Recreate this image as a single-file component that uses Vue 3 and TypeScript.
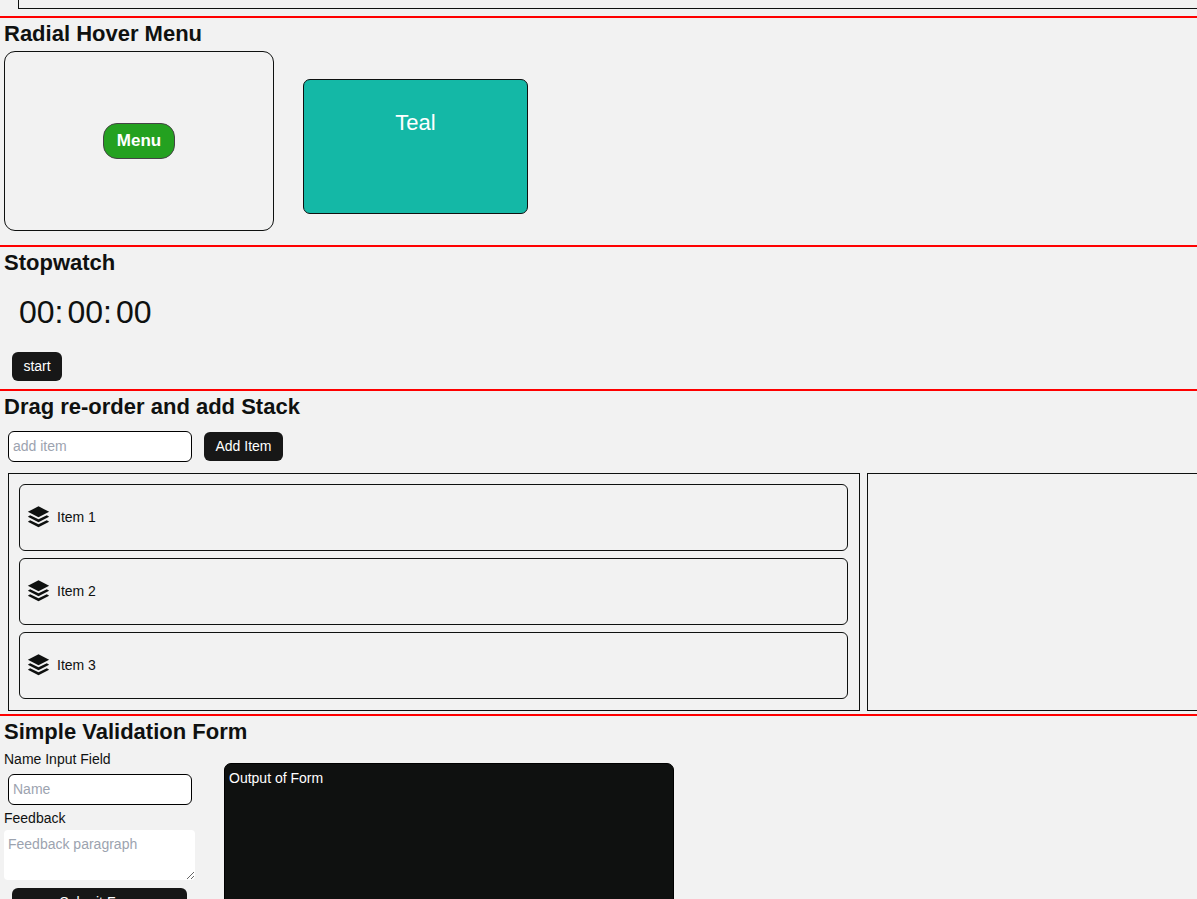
<script setup lang="ts">
import { ref } from 'vue'

interface StackItem {
  id: number
  label: string
}

const items = ref<StackItem[]>([
  { id: 1, label: 'Item 1' },
  { id: 2, label: 'Item 2' },
  { id: 3, label: 'Item 3' },
])
const draft = ref('')
const time = ref<string[]>(['00', '00', '00'])
const name = ref('')
const feedback = ref('')

function addItem(): void {
  const label = draft.value.trim()
  if (!label) return
  items.value.push({ id: items.value.length + 1, label })
  draft.value = ''
}
</script>

<template>
  <main class="page">
    <section class="section previous">
      <div class="previous-box"></div>
    </section>

    <section class="section">
      <h2>Radial Hover Menu</h2>
      <div class="radial-row">
        <div class="radial-area">
          <button type="button" class="menu-button">Menu</button>
        </div>
        <div class="swatch">Teal</div>
      </div>
    </section>

    <section class="section">
      <h2>Stopwatch</h2>
      <div class="clock">
        <span>{{ time[0] }}:</span>
        <span>{{ time[1] }}:</span>
        <span>{{ time[2] }}</span>
      </div>
      <button type="button" class="button start">start</button>
    </section>

    <section class="section">
      <h2>Drag re-order and add Stack</h2>
      <form class="add-row" @submit.prevent="addItem">
        <input v-model="draft" class="field" type="text" placeholder="add item" aria-label="add item" />
        <button type="submit" class="button add">Add Item</button>
      </form>
      <div class="panels">
        <ul class="panel">
          <li v-for="item in items" :key="item.id" class="item" draggable="true">
            <svg class="stack-icon" viewBox="0 0 66 66" aria-hidden="true">
              <path d="M33 1 65 17.500 33 34 1 17.500Z" />
              <path d="M8 28 33 40 58 28 65 32 33 48.500 1 32Z" />
              <path d="M8 43 33 55 58 43 65 47 33 63.500 1 47Z" />
            </svg>
            <span>{{ item.label }}</span>
          </li>
        </ul>
        <div class="panel"></div>
      </div>
    </section>

    <section class="section last">
      <h2>Simple Validation Form</h2>
      <div class="form-row">
        <form class="form" @submit.prevent>
          <label for="name">Name Input Field</label>
          <input id="name" v-model="name" class="field" type="text" placeholder="Name" />
          <label for="feedback">Feedback</label>
          <textarea id="feedback" v-model="feedback" placeholder="Feedback paragraph"></textarea>
          <button type="submit" class="button submit">Submit Form</button>
        </form>
        <output class="output">Output of Form</output>
      </div>
    </section>
  </main>
</template>

<style>
body {
  margin: 0;
  background: #f2f2f2;
}
</style>

<style scoped>
.page,
.page * {
  box-sizing: border-box;
}
.page {
  height: 100vh;
  overflow: hidden;
  background: #f2f2f2;
  color: #0f1110;
  font: 14px/22px "Liberation Sans", Arial, sans-serif;
}
.section {
  border-bottom: 2px solid #f00;
}
.last {
  border-bottom: 0;
}
h2 {
  height: 30px;
  margin: 0;
  padding-left: 4px;
  font-size: 22px;
  line-height: 32px;
  font-weight: 700;
}
button,
input,
textarea {
  font: inherit;
}
.previous {
  padding: 0 0 7px 18px;
}
.previous-box {
  height: 9px;
  border: solid #0f1110;
  border-width: 0 0 1px 1px;
}
.radial-row {
  display: flex;
  align-items: flex-start;
  gap: 29px;
  padding: 3px 4px 14px;
}
.radial-area {
  display: flex;
  align-items: center;
  justify-content: center;
  width: 270px;
  height: 180px;
  border: 1px solid #0f1110;
  border-radius: 11px;
}
.menu-button {
  min-width: 72px;
  height: 36px;
  padding: 0 12px;
  border: 1px solid #444;
  border-radius: 14px;
  background: #24a120;
  color: #fff;
  font-size: 17px;
  font-weight: 700;
}
.swatch {
  width: 225px;
  height: 135px;
  margin-top: 28px;
  padding-top: 28px;
  border: 1px solid #0f1110;
  border-radius: 7px;
  background: #14b8a6;
  color: #fff;
  font-size: 22px;
  line-height: 30px;
  text-align: center;
}
.clock {
  display: flex;
  gap: 4px;
  padding: 15px 19px 20px;
  font-size: 32px;
  line-height: 40px;
}
.button {
  height: 29px;
  padding: 0 10px 2px;
  border: 0;
  border-radius: 6px;
  background: #171717;
  color: #fff;
  line-height: 20px;
}
.start {
  display: block;
  min-width: 50px;
  margin: 0 12px 8px;
}
.add {
  min-width: 79px;
}
.field {
  width: 184px;
  height: 31px;
  padding: 0 4px 2px;
  border: 1px solid #000;
  border-radius: 6px;
  background: #fff;
  color: #0f1110;
}
::placeholder {
  color: #9ca3af;
  opacity: 1;
}
.add-row {
  display: flex;
  align-items: center;
  gap: 12px;
  padding: 10px 8px 11px;
}
.panels {
  display: grid;
  grid-template-columns: repeat(2, 72%);
  gap: 7px;
  padding: 0 6px 3px 8px;
}
.panel {
  display: flex;
  flex-direction: column;
  gap: 7px;
  margin: 0;
  padding: 10px 11px 11px 10px;
  border: 1px solid #0f1110;
  list-style: none;
}
.item {
  display: flex;
  align-items: center;
  gap: 7px;
  height: 67px;
  padding: 0 7px 2px;
  border: 1px solid #0f1110;
  border-radius: 6px;
}
.stack-icon {
  width: 23px;
  height: 22px;
  fill: #0f1110;
}
.form-row {
  display: flex;
  align-items: flex-start;
  gap: 29px;
  padding-left: 4px;
}
.form {
  display: flex;
  flex-direction: column;
  width: 191px;
  padding-top: 2px;
}
.form .field {
  margin: 4px 4px 2px;
}
textarea {
  display: block;
  width: 100%;
  height: 50px;
  margin: 1px 0 8px;
  padding: 4px;
  border: 0;
  border-radius: 4px;
  background: #fff;
  line-height: 20px;
}
.submit {
  margin: 0 8px;
}
.output {
  display: block;
  width: 450px;
  height: 225px;
  margin-top: 17px;
  padding: 3px 4px;
  border: 1px solid #000;
  border-radius: 7px;
  background: #0f1110;
  color: #fff;
}
</style>
